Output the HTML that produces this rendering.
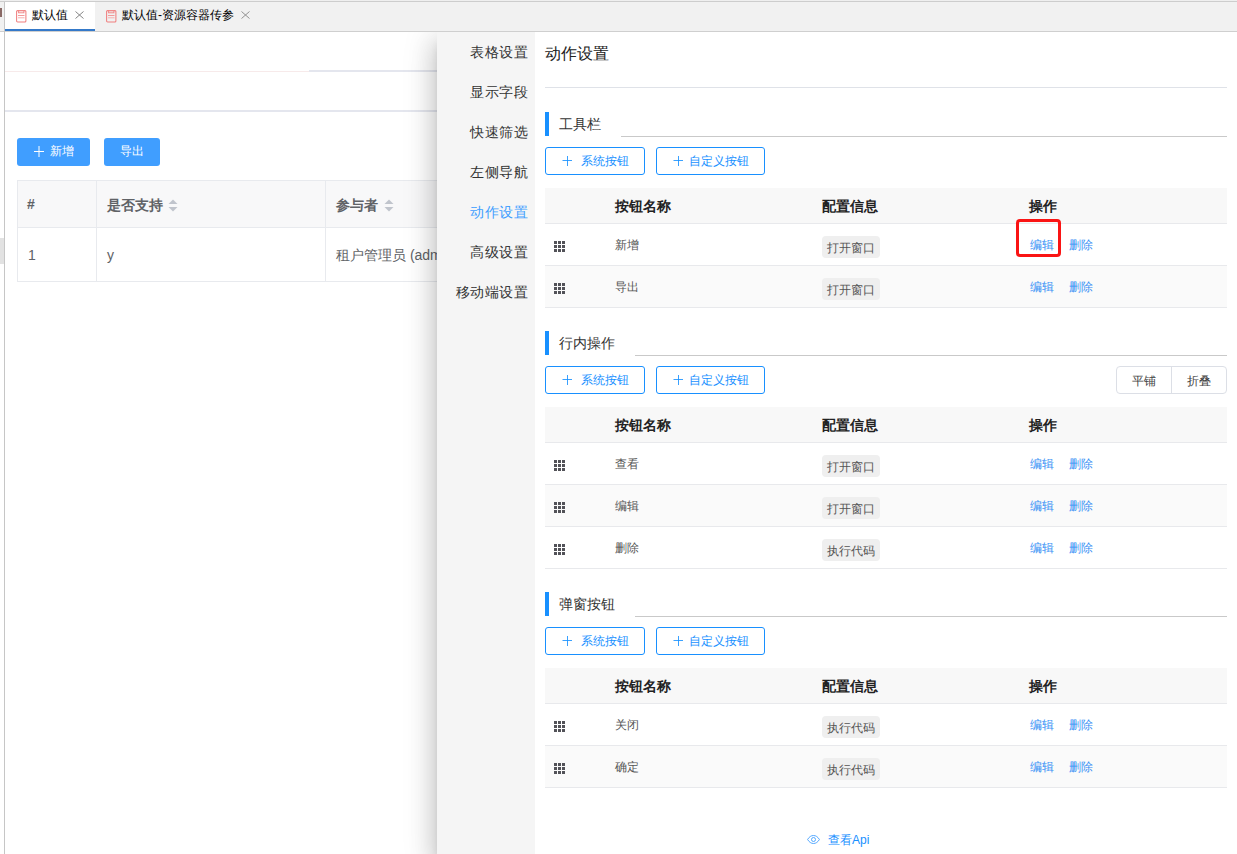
<!DOCTYPE html>
<html><head><meta charset="utf-8">
<style>
*{box-sizing:border-box;margin:0;padding:0}
html,body{width:1237px;height:854px;overflow:hidden}
body{position:relative;background:#fff;font-family:"Liberation Sans",sans-serif;color:#333}
.a{position:absolute}
.t{position:absolute;white-space:nowrap;line-height:1}
/* tab bar */
#tabbar{left:0;top:0;width:1237px;height:32px;background:#f1f1f1;border-top:1px solid #efefef;border-bottom:1px solid #cfcfcf;z-index:5}
#tabline{left:0;top:1px;width:1237px;height:1px;background:#cdcdcd;z-index:6}
.z{z-index:7}
#vline{left:4px;top:2px;width:1px;height:852px;background:#c6c6c6;z-index:6}
.tab1{left:5px;top:2px;width:90px;height:29px;background:#fff;border-bottom:2px solid #3479c9;z-index:6}
.docico{width:11px;height:13px}
/* main */
.btnp{background:#409eff;color:#fff;border-radius:3px;font-size:12px;height:28px;top:138px}
.mt{left:17px;top:180px;width:440px;height:102px;border:1px solid #e6e8ec;border-right:none}
.mth{background:#f8f8f9}
.sort{width:10px;height:13px}
/* drawer */
#drawer{left:437px;top:32px;width:800px;height:822px;background:#fff;box-shadow:0 8px 10px -5px rgba(0,0,0,.2),0 16px 24px 2px rgba(0,0,0,.14),0 6px 30px 5px rgba(0,0,0,.12)}
#nav{left:437px;top:32px;width:98px;height:822px;background:#f5f5f5}
.nav{font-size:14px;color:#333;right:709px;letter-spacing:0.5px}
.sec-bar{left:545px;width:4px;height:24px;background:#1890ff}
.sec-t{left:559px;font-size:14px;color:#333}
.sec-l{height:1px;background:#c9c9c9}
.obtn{height:28px;border:1px solid #1890ff;border-radius:3px;color:#1890ff;font-size:12px}
.th{left:545px;width:682px;height:36px;background:#f8f8f8;border-bottom:1px solid #e8e9ec}
.tr{left:545px;width:682px;height:42px;border-bottom:1px solid #e8e9ec}
.tr.s{background:#fafafa}
.hd{font-size:14px;font-weight:bold;color:#222}
.cell{font-size:12px;color:#555}
.tag{height:22px;background:#efefef;border-radius:4px;font-size:12px;color:#555;left:822px;width:58px}
.lnk{font-size:12px;color:#3791f5}
.drag{left:553px;width:13px;height:13px}
</style></head><body>
<div id="tabbar" class="a"></div>
<div id="tabline" class="a"></div>
<div class="a z" style="left:0;top:8px;width:2px;height:9px;background:#8a6a66"></div>
<div class="a tab1"></div>
<div id="vline" class="a"></div>
<svg class="a z" style="left:16px;top:10px" width="11" height="13" viewBox="0 0 11 13"><rect x="0.6" y="0.6" width="9.3" height="11.4" rx="1" fill="none" stroke="#f07f7f" stroke-width="1.05"/><rect x="2.6" y="0.6" width="5.3" height="2.2" fill="none" stroke="#f08a8a" stroke-width="1"/><line x1="2" y1="5.5" x2="8.5" y2="5.5" stroke="#f29a9a" stroke-width="1"/><line x1="2" y1="7.8" x2="8.5" y2="7.8" stroke="#f5b0b0" stroke-width="1"/></svg>
<div class="t z" style="left:32px;top:8.5px;font-size:12px;color:#000">默认值</div>
<svg class="a z" style="left:75px;top:11px" width="9" height="8" viewBox="0 0 9 8"><path d="M0.5 0.5L8.5 7.5M8.5 0.5L0.5 7.5" stroke="#777" stroke-width="0.9" fill="none"/></svg>
<svg class="a z" style="left:106px;top:10px" width="11" height="13" viewBox="0 0 11 13"><rect x="0.6" y="0.6" width="9.3" height="11.4" rx="1" fill="none" stroke="#f07f7f" stroke-width="1.05"/><rect x="2.6" y="0.6" width="5.3" height="2.2" fill="none" stroke="#f08a8a" stroke-width="1"/><line x1="2" y1="5.5" x2="8.5" y2="5.5" stroke="#f29a9a" stroke-width="1"/><line x1="2" y1="7.8" x2="8.5" y2="7.8" stroke="#f5b0b0" stroke-width="1"/></svg>
<div class="t z" style="left:122px;top:8.5px;font-size:12px;color:#000">默认值-资源容器传参</div>
<svg class="a z" style="left:241px;top:11px" width="9" height="8" viewBox="0 0 9 8"><path d="M0.5 0.5L8.5 7.5M8.5 0.5L0.5 7.5" stroke="#888" stroke-width="0.9" fill="none"/></svg>
<div class="a" style="left:5px;top:71px;width:304px;height:1px;background:#f7eaea"></div>
<div class="a" style="left:309px;top:70px;width:128px;height:2px;background:#e4e6ee"></div>
<div class="a" style="left:5px;top:110px;width:432px;height:2px;background:#e4e6ee"></div>
<div class="a" style="left:0;top:238px;width:4px;height:26px;background:#e2e2e2"></div>
<div class="a btnp" style="left:17px;width:73px"></div>
<svg class="a" style="left:34px;top:146px" width="10" height="11" viewBox="0 0 10 11"><path d="M5 0V11M0 5.5H10" stroke="#fff" stroke-width="1" fill="none"/></svg>
<div class="t" style="left:50px;top:145px;font-size:12px;color:#fff">新增</div>
<div class="a btnp" style="left:104px;width:56px"></div>
<div class="t" style="left:120px;top:145px;font-size:12px;color:#fff">导出</div>
<div class="a mth" style="left:17px;top:180px;width:420px;height:48px;border-top:1px solid #e8eaee;border-left:1px solid #e8eaee;border-bottom:1px solid #e8eaee"></div>
<div class="a" style="left:17px;top:228px;width:420px;height:54px;border-left:1px solid #e8eaee;border-bottom:1px solid #e8eaee"></div>
<div class="a" style="left:96px;top:180px;width:1px;height:101px;background:#e8eaee"></div>
<div class="a" style="left:325px;top:180px;width:1px;height:101px;background:#e8eaee"></div>
<div class="t" style="left:27px;top:197px;font-size:14px;font-weight:bold;color:#606266">#</div>
<div class="t" style="left:107px;top:198px;font-size:14px;font-weight:bold;color:#606266">是否支持</div>
<svg class="a" style="left:168px;top:199px" width="10" height="13" viewBox="0 0 10 13"><path d="M5 0.5L9.5 5H0.5Z" fill="#c0c4cc"/><path d="M5 12.5L9.5 8H0.5Z" fill="#c0c4cc"/></svg>
<div class="t" style="left:336px;top:198px;font-size:14px;font-weight:bold;color:#606266">参与者</div>
<svg class="a" style="left:384px;top:199px" width="10" height="13" viewBox="0 0 10 13"><path d="M5 0.5L9.5 5H0.5Z" fill="#c0c4cc"/><path d="M5 12.5L9.5 8H0.5Z" fill="#c0c4cc"/></svg>
<div class="t" style="left:28px;top:248px;font-size:14px;color:#606266">1</div>
<div class="t" style="left:107px;top:248px;font-size:14px;color:#606266">y</div>
<div class="t" style="left:336px;top:248px;font-size:14px;color:#606266">租户管理员 (admin)</div>
<div id="drawer" class="a"></div>
<div id="nav" class="a"></div>
<div class="t nav" style="top:45px;color:#333">表格设置</div>
<div class="t nav" style="top:85px;color:#333">显示字段</div>
<div class="t nav" style="top:125px;color:#333">快速筛选</div>
<div class="t nav" style="top:165px;color:#333">左侧导航</div>
<div class="t nav" style="top:205px;color:#409eff">动作设置</div>
<div class="t nav" style="top:245px;color:#333">高级设置</div>
<div class="t nav" style="top:285px;color:#333">移动端设置</div>
<div class="t" style="left:545px;top:46px;font-size:16px;color:#222">动作设置</div>
<div class="a" style="left:545px;top:87px;width:682px;height:1px;background:#dfe2e8"></div>
<div class="a sec-bar" style="top:112px"></div>
<div class="t sec-t" style="top:117px">工具栏</div>
<div class="a sec-l" style="left:621px;top:136px;width:606px"></div>
<div class="a obtn" style="left:545px;top:147px;width:100px"></div>
<svg class="a" style="left:562px;top:156px" width="10" height="10" viewBox="0 0 10 10"><path d="M5.5 0V10M0.5 4.5H10.5" stroke="#1890ff" stroke-width="1" fill="none" opacity="0.85"/></svg>
<div class="t" style="left:581px;top:155px;font-size:12px;color:#1890ff">系统按钮</div>
<div class="a obtn" style="left:656px;top:147px;width:109px"></div>
<svg class="a" style="left:673px;top:156px" width="10" height="10" viewBox="0 0 10 10"><path d="M5.5 0V10M0.5 4.5H10.5" stroke="#1890ff" stroke-width="1" fill="none" opacity="0.85"/></svg>
<div class="t" style="left:689px;top:155px;font-size:12px;color:#1890ff">自定义按钮</div>
<div class="a th" style="top:188px"></div>
<div class="t hd" style="left:615px;top:199px">按钮名称</div>
<div class="t hd" style="left:822px;top:199px">配置信息</div>
<div class="t hd" style="left:1029px;top:199px">操作</div>
<div class="a tr" style="top:224px"></div>
<svg class="a" style="left:554px;top:241px" width="11" height="11" viewBox="0 0 11 11"><rect x="0" y="0" width="3" height="3" fill="#525258"/><rect x="4" y="0" width="3" height="3" fill="#525258"/><rect x="8" y="0" width="3" height="3" fill="#525258"/><rect x="0" y="4" width="3" height="3" fill="#525258"/><rect x="4" y="4" width="3" height="3" fill="#525258"/><rect x="8" y="4" width="3" height="3" fill="#525258"/><rect x="0" y="8" width="3" height="3" fill="#525258"/><rect x="4" y="8" width="3" height="3" fill="#525258"/><rect x="8" y="8" width="3" height="3" fill="#525258"/></svg>
<div class="t cell" style="left:615px;top:239px">新增</div>
<div class="a tag" style="top:236px"></div>
<div class="t" style="left:827px;top:242px;font-size:12px;color:#555">打开窗口</div>
<div class="t lnk" style="left:1030px;top:239px">编辑</div>
<div class="t lnk" style="left:1069px;top:239px">删除</div>
<div class="a tr s" style="top:266px"></div>
<svg class="a" style="left:554px;top:283px" width="11" height="11" viewBox="0 0 11 11"><rect x="0" y="0" width="3" height="3" fill="#525258"/><rect x="4" y="0" width="3" height="3" fill="#525258"/><rect x="8" y="0" width="3" height="3" fill="#525258"/><rect x="0" y="4" width="3" height="3" fill="#525258"/><rect x="4" y="4" width="3" height="3" fill="#525258"/><rect x="8" y="4" width="3" height="3" fill="#525258"/><rect x="0" y="8" width="3" height="3" fill="#525258"/><rect x="4" y="8" width="3" height="3" fill="#525258"/><rect x="8" y="8" width="3" height="3" fill="#525258"/></svg>
<div class="t cell" style="left:615px;top:281px">导出</div>
<div class="a tag" style="top:278px"></div>
<div class="t" style="left:827px;top:284px;font-size:12px;color:#555">打开窗口</div>
<div class="t lnk" style="left:1030px;top:281px">编辑</div>
<div class="t lnk" style="left:1069px;top:281px">删除</div>
<div class="a sec-bar" style="top:331px"></div>
<div class="t sec-t" style="top:336px">行内操作</div>
<div class="a sec-l" style="left:635px;top:355px;width:592px"></div>
<div class="a obtn" style="left:545px;top:366px;width:100px"></div>
<svg class="a" style="left:562px;top:375px" width="10" height="10" viewBox="0 0 10 10"><path d="M5.5 0V10M0.5 4.5H10.5" stroke="#1890ff" stroke-width="1" fill="none" opacity="0.85"/></svg>
<div class="t" style="left:581px;top:374px;font-size:12px;color:#1890ff">系统按钮</div>
<div class="a obtn" style="left:656px;top:366px;width:109px"></div>
<svg class="a" style="left:673px;top:375px" width="10" height="10" viewBox="0 0 10 10"><path d="M5.5 0V10M0.5 4.5H10.5" stroke="#1890ff" stroke-width="1" fill="none" opacity="0.85"/></svg>
<div class="t" style="left:689px;top:374px;font-size:12px;color:#1890ff">自定义按钮</div>
<div class="a" style="left:1116px;top:366px;width:111px;height:28px;border:1px solid #dcdfe6;border-radius:4px"></div>
<div class="a" style="left:1171px;top:366px;width:1px;height:28px;background:#dcdfe6"></div>
<div class="t" style="left:1132px;top:375px;font-size:12px;color:#444">平铺</div>
<div class="t" style="left:1187px;top:375px;font-size:12px;color:#444">折叠</div>
<div class="a th" style="top:407px"></div>
<div class="t hd" style="left:615px;top:418px">按钮名称</div>
<div class="t hd" style="left:822px;top:418px">配置信息</div>
<div class="t hd" style="left:1029px;top:418px">操作</div>
<div class="a tr" style="top:443px"></div>
<svg class="a" style="left:554px;top:460px" width="11" height="11" viewBox="0 0 11 11"><rect x="0" y="0" width="3" height="3" fill="#525258"/><rect x="4" y="0" width="3" height="3" fill="#525258"/><rect x="8" y="0" width="3" height="3" fill="#525258"/><rect x="0" y="4" width="3" height="3" fill="#525258"/><rect x="4" y="4" width="3" height="3" fill="#525258"/><rect x="8" y="4" width="3" height="3" fill="#525258"/><rect x="0" y="8" width="3" height="3" fill="#525258"/><rect x="4" y="8" width="3" height="3" fill="#525258"/><rect x="8" y="8" width="3" height="3" fill="#525258"/></svg>
<div class="t cell" style="left:615px;top:458px">查看</div>
<div class="a tag" style="top:455px"></div>
<div class="t" style="left:827px;top:461px;font-size:12px;color:#555">打开窗口</div>
<div class="t lnk" style="left:1030px;top:458px">编辑</div>
<div class="t lnk" style="left:1069px;top:458px">删除</div>
<div class="a tr s" style="top:485px"></div>
<svg class="a" style="left:554px;top:502px" width="11" height="11" viewBox="0 0 11 11"><rect x="0" y="0" width="3" height="3" fill="#525258"/><rect x="4" y="0" width="3" height="3" fill="#525258"/><rect x="8" y="0" width="3" height="3" fill="#525258"/><rect x="0" y="4" width="3" height="3" fill="#525258"/><rect x="4" y="4" width="3" height="3" fill="#525258"/><rect x="8" y="4" width="3" height="3" fill="#525258"/><rect x="0" y="8" width="3" height="3" fill="#525258"/><rect x="4" y="8" width="3" height="3" fill="#525258"/><rect x="8" y="8" width="3" height="3" fill="#525258"/></svg>
<div class="t cell" style="left:615px;top:500px">编辑</div>
<div class="a tag" style="top:497px"></div>
<div class="t" style="left:827px;top:503px;font-size:12px;color:#555">打开窗口</div>
<div class="t lnk" style="left:1030px;top:500px">编辑</div>
<div class="t lnk" style="left:1069px;top:500px">删除</div>
<div class="a tr" style="top:527px"></div>
<svg class="a" style="left:554px;top:544px" width="11" height="11" viewBox="0 0 11 11"><rect x="0" y="0" width="3" height="3" fill="#525258"/><rect x="4" y="0" width="3" height="3" fill="#525258"/><rect x="8" y="0" width="3" height="3" fill="#525258"/><rect x="0" y="4" width="3" height="3" fill="#525258"/><rect x="4" y="4" width="3" height="3" fill="#525258"/><rect x="8" y="4" width="3" height="3" fill="#525258"/><rect x="0" y="8" width="3" height="3" fill="#525258"/><rect x="4" y="8" width="3" height="3" fill="#525258"/><rect x="8" y="8" width="3" height="3" fill="#525258"/></svg>
<div class="t cell" style="left:615px;top:542px">删除</div>
<div class="a tag" style="top:539px"></div>
<div class="t" style="left:827px;top:545px;font-size:12px;color:#555">执行代码</div>
<div class="t lnk" style="left:1030px;top:542px">编辑</div>
<div class="t lnk" style="left:1069px;top:542px">删除</div>
<div class="a sec-bar" style="top:592px"></div>
<div class="t sec-t" style="top:597px">弹窗按钮</div>
<div class="a sec-l" style="left:635px;top:616px;width:592px"></div>
<div class="a obtn" style="left:545px;top:627px;width:100px"></div>
<svg class="a" style="left:562px;top:636px" width="10" height="10" viewBox="0 0 10 10"><path d="M5.5 0V10M0.5 4.5H10.5" stroke="#1890ff" stroke-width="1" fill="none" opacity="0.85"/></svg>
<div class="t" style="left:581px;top:635px;font-size:12px;color:#1890ff">系统按钮</div>
<div class="a obtn" style="left:656px;top:627px;width:109px"></div>
<svg class="a" style="left:673px;top:636px" width="10" height="10" viewBox="0 0 10 10"><path d="M5.5 0V10M0.5 4.5H10.5" stroke="#1890ff" stroke-width="1" fill="none" opacity="0.85"/></svg>
<div class="t" style="left:689px;top:635px;font-size:12px;color:#1890ff">自定义按钮</div>
<div class="a th" style="top:668px"></div>
<div class="t hd" style="left:615px;top:679px">按钮名称</div>
<div class="t hd" style="left:822px;top:679px">配置信息</div>
<div class="t hd" style="left:1029px;top:679px">操作</div>
<div class="a tr" style="top:704px"></div>
<svg class="a" style="left:554px;top:721px" width="11" height="11" viewBox="0 0 11 11"><rect x="0" y="0" width="3" height="3" fill="#525258"/><rect x="4" y="0" width="3" height="3" fill="#525258"/><rect x="8" y="0" width="3" height="3" fill="#525258"/><rect x="0" y="4" width="3" height="3" fill="#525258"/><rect x="4" y="4" width="3" height="3" fill="#525258"/><rect x="8" y="4" width="3" height="3" fill="#525258"/><rect x="0" y="8" width="3" height="3" fill="#525258"/><rect x="4" y="8" width="3" height="3" fill="#525258"/><rect x="8" y="8" width="3" height="3" fill="#525258"/></svg>
<div class="t cell" style="left:615px;top:719px">关闭</div>
<div class="a tag" style="top:716px"></div>
<div class="t" style="left:827px;top:722px;font-size:12px;color:#555">执行代码</div>
<div class="t lnk" style="left:1030px;top:719px">编辑</div>
<div class="t lnk" style="left:1069px;top:719px">删除</div>
<div class="a tr s" style="top:746px"></div>
<svg class="a" style="left:554px;top:763px" width="11" height="11" viewBox="0 0 11 11"><rect x="0" y="0" width="3" height="3" fill="#525258"/><rect x="4" y="0" width="3" height="3" fill="#525258"/><rect x="8" y="0" width="3" height="3" fill="#525258"/><rect x="0" y="4" width="3" height="3" fill="#525258"/><rect x="4" y="4" width="3" height="3" fill="#525258"/><rect x="8" y="4" width="3" height="3" fill="#525258"/><rect x="0" y="8" width="3" height="3" fill="#525258"/><rect x="4" y="8" width="3" height="3" fill="#525258"/><rect x="8" y="8" width="3" height="3" fill="#525258"/></svg>
<div class="t cell" style="left:615px;top:761px">确定</div>
<div class="a tag" style="top:758px"></div>
<div class="t" style="left:827px;top:764px;font-size:12px;color:#555">执行代码</div>
<div class="t lnk" style="left:1030px;top:761px">编辑</div>
<div class="t lnk" style="left:1069px;top:761px">删除</div>
<div class="a" style="left:1016px;top:219px;width:45px;height:38px;border:3px solid #fa1414;border-radius:4px"></div>
<svg class="a" style="left:807px;top:835px" width="13" height="9" viewBox="0 0 13 9"><path d="M0.6 4.5C2.2 1.8 4.2 0.5 6.5 0.5S10.8 1.8 12.4 4.5C10.8 7.2 8.8 8.5 6.5 8.5S2.2 7.2 0.6 4.5Z" fill="none" stroke="#3a9bff" stroke-width="0.85"/><circle cx="6.5" cy="4.5" r="2" fill="none" stroke="#3a9bff" stroke-width="0.85"/></svg>
<div class="t" style="left:828px;top:834px;font-size:12px;color:#1890ff">查看Api</div>
</body></html>
